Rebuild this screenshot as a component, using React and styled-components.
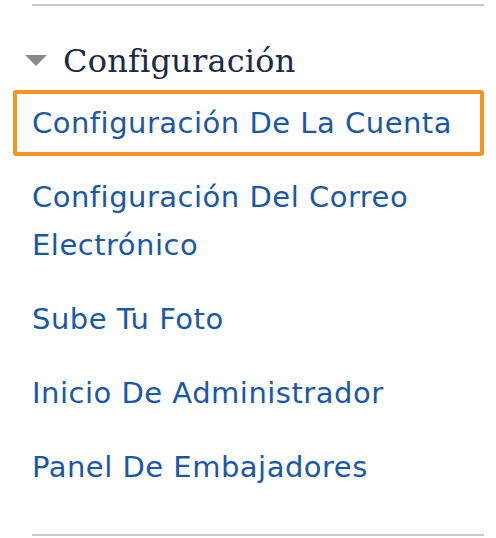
import React from 'react';
import styled, { createGlobalStyle } from 'styled-components';

const GlobalStyle = createGlobalStyle`
  html, body {
    margin: 0;
    padding: 0;
    background: #fff;
  }
  body {
    font-family: "DejaVu Sans", "Open Sans", sans-serif;
  }
`;

const Panel = styled.nav`
  width: 496px;
  box-sizing: border-box;
  padding: 4px 12px 0 13px;
`;

const Divider = styled.hr`
  margin: 0 0 0 19px;
  border: none;
  height: 2px;
  background: #c9c9c9;
`;

const Section = styled.section`
  padding: 35px 0 34px;
`;

const Heading = styled.h2`
  display: flex;
  align-items: center;
  gap: 16px;
  margin: 0 0 9px 12px;
  font-family: "DejaVu Serif", "Liberation Serif", serif;
  font-weight: 400;
  font-size: 32px;
  letter-spacing: 0.2px;
  line-height: 40px;
  color: #1c2945;
`;

const Caret = styled.span`
  width: 0;
  height: 0;
  border-left: 11px solid transparent;
  border-right: 11px solid transparent;
  border-top: 11px solid #8a8a8a;
  margin-top: -1px;
`;

const List = styled.ul`
  list-style: none;
  margin: 0;
  padding: 0;
  display: flex;
  flex-direction: column;
  gap: 8px;
`;

const Item = styled.li`
  margin: 0;
`;

const NavLink = styled.a`
  display: block;
  padding: 5px 14px 5px 15px;
  border: 4px solid ${({ $focused }) => ($focused ? '#f7931e' : 'transparent')};
  border-radius: 3px;
  font-size: 29px;
  letter-spacing: 0.5px;
  line-height: 48px;
  color: #1958a8;
  text-decoration: none;
`;

const links = [
  'Configuración De La Cuenta',
  'Configuración Del Correo Electrónico',
  'Sube Tu Foto',
  'Inicio De Administrador',
  'Panel De Embajadores',
];

const App = () => (
  <>
    <GlobalStyle />
    <Panel>
      <Divider />
      <Section>
        <Heading>
          <Caret />
          Configuración
        </Heading>
        <List>
          {links.map((label, i) => (
            <Item key={label}>
              <NavLink href="#" $focused={i === 0}>
                {label}
              </NavLink>
            </Item>
          ))}
        </List>
      </Section>
      <Divider />
    </Panel>
  </>
);

export default App;
